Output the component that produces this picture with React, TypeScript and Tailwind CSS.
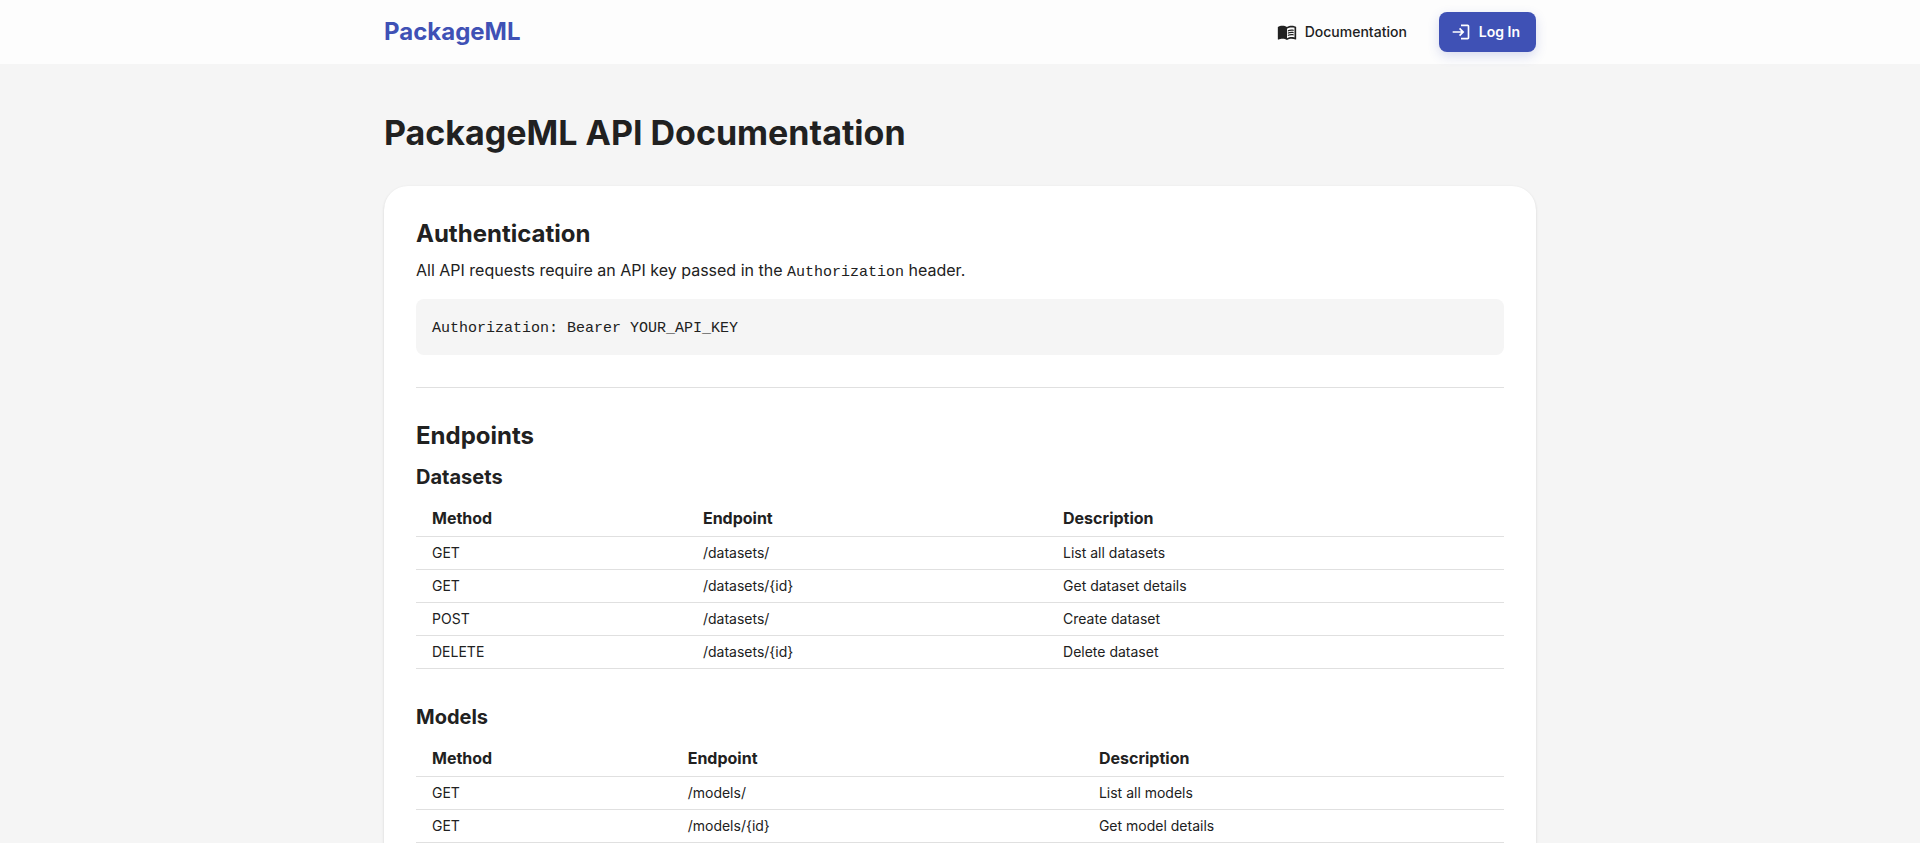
import { MdLogin, MdMenuBook } from "react-icons/md";

type Endpoint = { method: string; path: string; description: string };

const datasetEndpoints: Endpoint[] = [
  { method: "GET", path: "/datasets/", description: "List all datasets" },
  { method: "GET", path: "/datasets/{id}", description: "Get dataset details" },
  { method: "POST", path: "/datasets/", description: "Create dataset" },
  { method: "DELETE", path: "/datasets/{id}", description: "Delete dataset" },
];

const modelEndpoints: Endpoint[] = [
  { method: "GET", path: "/models/", description: "List all models" },
  { method: "GET", path: "/models/{id}", description: "Get model details" },
];

function Header() {
  return (
    <header className="bg-[#fdfdfd]">
      <div className="mx-auto flex h-16 max-w-[1200px] items-center justify-between px-6">
        <a href="#" className="text-2xl font-bold text-[#3f51b5]">
          PackageML
        </a>
        <nav className="flex items-center gap-4">
          <a href="#" className="flex h-10 items-center gap-2 rounded-lg px-4 text-sm font-medium">
            <MdMenuBook size={20} aria-hidden="true" />
            Documentation
          </a>
          <button
            type="button"
            className="flex h-10 items-center gap-2 rounded-lg bg-[#3f51b5] pr-4 pl-3 text-sm font-semibold text-white shadow-[0_4px_12px_rgba(63,81,181,0.2)]"
          >
            <MdLogin size={20} aria-hidden="true" />
            Log In
          </button>
        </nav>
      </div>
    </header>
  );
}

function EndpointTable({
  title,
  rows,
  methodWidth,
  pathWidth,
}: {
  title: string;
  rows: Endpoint[];
  methodWidth: string;
  pathWidth: string;
}) {
  return (
    <section>
      <h3 className="mb-1.5 text-xl leading-[34px] font-bold">{title}</h3>
      <table aria-label={title} className="w-full table-fixed border-collapse text-left">
        <thead>
          <tr className="border-b border-[#e0e0e0]">
            <th scope="col" className={`${methodWidth} px-4 py-1.5 text-base font-bold`}>
              Method
            </th>
            <th scope="col" className={`${pathWidth} px-4 py-1.5 text-base font-bold`}>
              Endpoint
            </th>
            <th scope="col" className="px-4 py-1.5 text-base font-bold">
              Description
            </th>
          </tr>
        </thead>
        <tbody>
          {rows.map((row) => (
            <tr key={`${row.method} ${row.path}`} className="border-b border-[#e0e0e0] text-sm">
              <td className="px-4 py-1.5">{row.method}</td>
              <td className="px-4 py-1.5">{row.path}</td>
              <td className="px-4 py-1.5">{row.description}</td>
            </tr>
          ))}
        </tbody>
      </table>
    </section>
  );
}

export default function App() {
  return (
    <div className="min-h-screen bg-[#f5f5f5] font-['Inter',sans-serif] text-[#212121]">
      <Header />
      <main className="mx-auto max-w-[1200px] px-6 py-12">
        <h1 className="mb-8 text-[34px] leading-[42px] font-bold">PackageML API Documentation</h1>
        <div className="rounded-3xl bg-white p-8 shadow-[0_2px_1px_-1px_rgba(0,0,0,0.1),0_1px_1px_rgba(0,0,0,0.07),0_1px_3px_rgba(0,0,0,0.12)]">
          <section>
            <h2 className="mb-2 text-2xl font-bold">Authentication</h2>
            <p className="mb-4 text-base leading-[25px]">
              All API requests require an API key passed in the{" "}
              <code className="font-['Liberation_Mono',monospace] text-[15px] leading-none">Authorization</code> header.
            </p>
            <pre className="rounded-lg bg-[#f5f5f5] px-4 pt-[18px] pb-3.5 font-['Liberation_Mono',monospace] text-[15px] leading-6">
              Authorization: Bearer YOUR_API_KEY
            </pre>
          </section>
          <hr className="my-8 border-[#e0e0e0]" />
          <h2 className="mb-2 text-2xl font-bold">Endpoints</h2>
          <div className="flex flex-col gap-[31px]">
            <EndpointTable
              title="Datasets"
              rows={datasetEndpoints}
              methodWidth="w-[24.9%]"
              pathWidth="w-[33.1%]"
            />
            <EndpointTable
              title="Models"
              rows={modelEndpoints}
              methodWidth="w-[23.5%]"
              pathWidth="w-[37.8%]"
            />
          </div>
        </div>
      </main>
    </div>
  );
}
